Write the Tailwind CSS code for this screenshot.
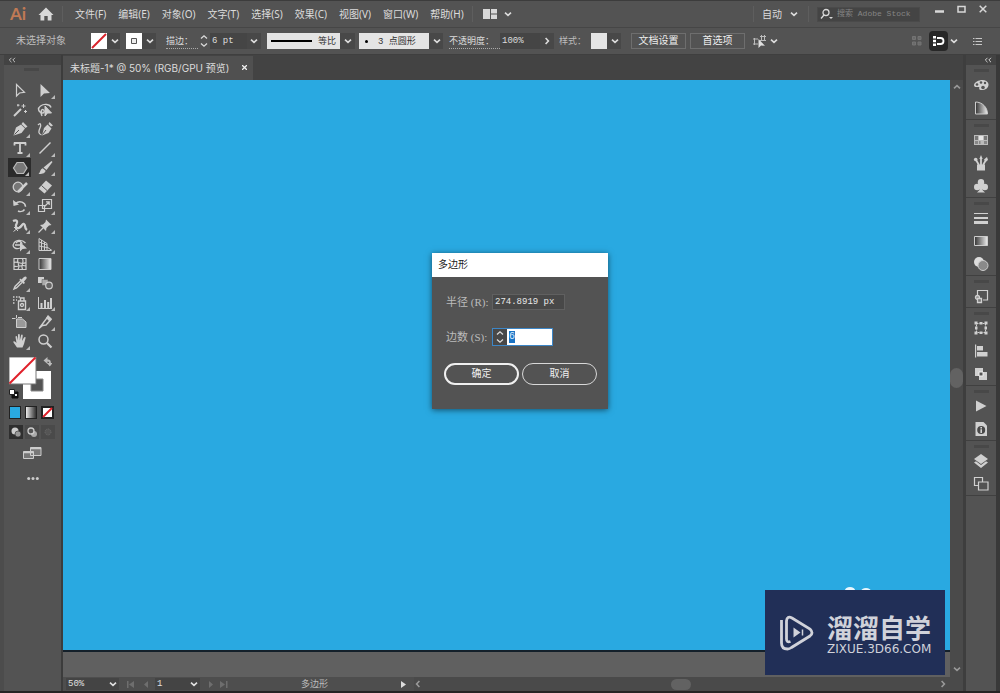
<!DOCTYPE html>
<html lang="zh-CN">
<head>
<meta charset="utf-8">
<title>未标题-1* @ 50%</title>
<script src="https://cdn.jsdelivr.net/npm/@tailwindcss/browser@4"></script>
</head>
<body class="h-screen overflow-hidden bg-[#535353] font-['Noto_Sans','Noto_Sans_CJK_SC',sans-serif] text-[10px] leading-3 text-[#dcdcdc]">
<svg class="hidden">
  <symbol id="chev" viewBox="0 0 8 8"><path d="M1 2.6 L4 5.4 L7 2.6" fill="none" stroke="currentColor" stroke-width="1.6"/></symbol>
  <symbol id="spin" viewBox="0 0 8 14"><path d="M1 4.5 L4 1.8 L7 4.5 M1 9.5 L4 12.2 L7 9.5" fill="none" stroke="currentColor" stroke-width="1.3"/></symbol>
  <symbol id="dbl" viewBox="0 0 8 6"><path d="M3.5 .8 L1.3 3 L3.5 5.2 M7 .8 L4.8 3 L7 5.2" fill="none" stroke="currentColor" stroke-width="1"/></symbol>
</svg>

<div class="flex h-full flex-col border-b-2 border-[#262424]">
  <!-- menu bar -->
  <header class="flex h-7 shrink-0 items-center border-t border-b border-t-[#3c3c3c] border-b-[#464646] pr-[13px]">
    <span class="ml-2.5 w-7 font-['Lato','Open_Sans',sans-serif] text-[17px] leading-5 font-bold text-[#c07a55]">Ai</span>
    <button aria-label="主页" class="flex w-4 justify-center"><svg class="h-4 w-4" viewBox="0 0 16 16"><path d="M8 1.5 L15.5 9 H13.5 V14.5 H9.7 V10 H6.3 V14.5 H2.500 V9 H.5 Z" fill="#d8d8d8"/></svg></button>
    <i class="ml-2 h-4 w-px bg-[#5e5e5e]"></i>
    <nav class="ml-3 flex gap-3">
      <button>文件(F)</button><button>编辑(E)</button><button>对象(O)</button><button>文字(T)</button><button>选择(S)</button><button>效果(C)</button><button>视图(V)</button><button>窗口(W)</button><button>帮助(H)</button>
    </nav>
    <i class="ml-2 h-4 w-px bg-[#5e5e5e]"></i>
    <button aria-label="排列文档" class="ml-2.5 flex items-center gap-1.5"><svg class="h-[10px] w-[15px]" viewBox="0 0 15 10" fill="#d8d8d8"><path d="M0 0h7v10H0zM8 0h6v4.500H8zM8 5.500h6V10H8z"/></svg><svg class="h-2 w-2"><use href="#chev"/></svg></button>
    <i class="ml-auto h-4 w-px bg-[#5e5e5e]"></i>
    <button class="ml-2 flex items-center gap-2">自动<svg class="h-2 w-2"><use href="#chev"/></svg></button>
    <i class="ml-2.5 h-4 w-px bg-[#5e5e5e]"></i>
    <label class="ml-2 flex h-[15px] w-[103px] items-center border border-[#4a4a4a] bg-[#444] pl-0.5">
      <svg class="mr-1 h-3 w-[13px] shrink-0" viewBox="0 0 13 12" fill="none" stroke="#d8d8d8" stroke-width="1.300"><circle cx="6" cy="4.500" r="3"/><path d="M4 7 L1 10.500"/><path d="M9 9h4l-2 2z" fill="#d8d8d8" stroke="none"/></svg>
      <input aria-label="搜索" placeholder="搜索 Adobe Stock" class="w-full min-w-0 bg-transparent font-['Liberation_Mono','Noto_Sans_CJK_SC',monospace] text-[8px] text-[#8b8b8b] outline-none placeholder:text-[#858585]">
    </label>
    <div class="ml-[15px] flex h-full items-start gap-[13px] pt-1">
      <button aria-label="最小化"><svg class="h-[10px] w-[9px]" viewBox="0 0 9 10"><path d="M0 6.500h9" stroke="#d8d8d8" stroke-width="2.500"/></svg></button>
      <button aria-label="最大化"><svg class="h-2 w-[9px]" viewBox="0 0 9 8"><path d="M1 1.500h7v5.500H1z" fill="none" stroke="#d8d8d8" stroke-width="1.500"/></svg></button>
      <button aria-label="关闭"><svg class="h-2 w-2" viewBox="0 0 8 8"><path d="M.7 .7 L7.3 7.3 M7.300 .7 L.7 7.300" stroke="#d8d8d8" stroke-width="1.500"/></svg></button>
    </div>
  </header>

  <!-- control bar -->
  <section class="flex h-[27px] shrink-0 items-center border-b border-[#3f3f3f] font-['Liberation_Mono','Noto_Sans_CJK_SC',monospace]">
    <span class="ml-4 w-[75px] pt-px text-[#bdbdbd]">未选择对象</span>
    <button aria-label="填色" class="flex h-4 w-[29px] items-center bg-[#484848]"><svg class="mr-1 h-4 w-4" viewBox="0 0 16 16"><path d="M0 0h16v16H0z" fill="#fff"/><path d="M1 15 L15 1" stroke="#d8232b" stroke-width="2"/></svg><svg class="h-2 w-2"><use href="#chev"/></svg></button>
    <button aria-label="描边颜色" class="ml-1.5 flex h-4 w-[30px] items-center bg-[#484848]"><svg class="mr-1 h-4 w-4" viewBox="0 0 16 16"><path d="M0 0h16v16H0z" fill="#fff"/><path d="M5.500 5.500h5v5h-5z" fill="#eee" stroke="#555"/></svg><svg class="h-2 w-2"><use href="#chev"/></svg></button>
    <label for="sw" class="ml-2.5 w-8 border-b border-dotted border-[#aaa] pt-0.5 text-[9px] whitespace-nowrap">描边：</label>
    <button aria-label="调整描边" class="flex h-4 w-3 items-center justify-center"><svg class="h-3.5 w-2"><use href="#spin"/></svg></button>
    <input id="sw" value="6 pt" class="h-4 w-[37px] bg-[#454545] pl-0.5 text-[9px]">
    <button aria-label="描边粗细列表" class="flex h-4 w-3.5 items-center justify-center bg-[#484848]"><svg class="h-2 w-2"><use href="#chev"/></svg></button>
    <button class="ml-1.5 flex h-4 w-[88px] items-center bg-[#484848]"><span class="flex h-4 w-[73px] items-center gap-1.5 bg-[#e4e4e4] pl-1 text-[9px] text-[#333]"><i class="h-0.5 w-[41px] bg-black"></i><span class="pt-0.5">等比</span></span><svg class="ml-1 h-2 w-2"><use href="#chev"/></svg></button>
    <button class="ml-1 flex h-4 w-[84px] items-center bg-[#484848]"><span class="flex h-4 w-[70px] items-center bg-[#e4e4e4] pl-1.5 text-[9px] whitespace-pre text-[#333]"><i class="mr-2.5 h-[3px] w-[3px] rounded-full bg-black"></i><span class="pt-0.5">3 点圆形</span></span><svg class="ml-1 h-2 w-2"><use href="#chev"/></svg></button>
    <label for="op" class="ml-1.5 w-[51px] border-b border-dotted border-[#aaa] pt-0.5 text-[9px] whitespace-nowrap">不透明度：</label>
    <input id="op" value="100%" class="h-4 w-10 bg-[#454545] pl-0.5 text-[9px]">
    <button aria-label="不透明度滑块" class="flex h-4 w-3.5 items-center justify-center bg-[#484848]"><svg class="h-2 w-2 -rotate-90"><use href="#chev"/></svg></button>
    <span class="ml-[5px] w-8 pt-0.5 text-[9px] whitespace-nowrap text-[#bdbdbd]">样式：</span>
    <button aria-label="图形样式" class="flex h-4 w-[30px] items-center bg-[#484848]"><i class="mr-1 h-4 w-4 bg-[#e4e4e4]"></i><svg class="h-2 w-2"><use href="#chev"/></svg></button>
    <button class="ml-2.5 h-4 w-[55px] border border-[#6e6e6e] pt-px text-[#eee]">文档设置</button>
    <button class="ml-1 h-4 w-[55px] border border-[#6e6e6e] pt-px text-[#eee]">首选项</button>
    <button aria-label="选择类似对象" class="ml-2 flex items-center gap-1"><svg class="h-[13px] w-[13px]" viewBox="0 0 13 13"><path d="M0 4h5M0 9h5M1.500 3v7M7 1.500h6M7 5.500h6M8.500 0v6M11.500 0v6" stroke="#bbb"/><path d="M5.500 4v9l2.500-2.500 4 .3z" fill="#e0e0e0"/></svg><svg class="h-2 w-2"><use href="#chev"/></svg></button>
    <svg class="ml-auto h-2.5 w-2.5" viewBox="0 0 10 10"><path d="M.5 .5h3v3h-3zM6 .5h3v3H6zM.5 6h3v3h-3zM6 6h3v3H6z" fill="#6a6a6a" stroke="#747474"/></svg>
    <button aria-label="对齐" class="ml-[7px] flex h-5 w-[19px] items-center justify-center rounded-sm bg-[#272727]"><svg class="h-3 w-[13px]" viewBox="0 0 13 12"><path d="M1 1h3v2.500H1zM1 4.700h3v2.500H1zM1 8.500h3V11H1z" fill="#fff"/><path d="M5 3h3.500a2.600 2.600 0 0 1 0 6H5" fill="none" stroke="#fff" stroke-width="1.800"/></svg></button>
    <svg class="ml-0.5 h-2 w-2"><use href="#chev"/></svg>
    <button aria-label="面板菜单" class="mr-[18px] ml-[15px]"><svg class="h-[9px] w-[9px]" viewBox="0 0 9 9"><path d="M0 1.500h1.500M0 4.500h1.500M0 7.500h1.500M2.500 1.500H9M2.500 4.500H9M2.500 7.500H9" stroke="#c8c8c8"/></svg></button>
  </section>

  <div class="flex min-h-0 flex-1">
    <!-- toolbox -->
    <aside class="flex w-[63px] shrink-0 flex-col border-r-2 border-l-4 border-r-[#3c3c3c] border-l-[#4c4c4c]">
      <div class="flex h-[10px] shrink-0 items-center bg-[#434343] pl-1 text-[#c0c0c0]"><svg class="h-1.5 w-2"><use href="#dbl"/></svg></div>
      <i class="mt-[3px] ml-5 h-[3px] w-[15px] shrink-0 bg-[#484848]"></i>
      <div class="mt-[10px] ml-[3px] grid h-[270px] w-[50px] shrink-0 grid-cols-2 grid-rows-14 text-[#cfcfcf] [&_button]:relative [&_button]:flex [&_button]:items-center [&_button]:justify-center [&_svg]:h-4 [&_svg]:w-4 [&_.m]:absolute [&_.m]:right-0.5 [&_.m]:bottom-px [&_.m]:border-2 [&_.m]:border-transparent [&_.m]:border-r-[#bbb] [&_.m]:border-b-[#bbb]">
        <button aria-label="选择"><svg viewBox="0 0 16 16"><path d="M4.500 1.500V13L7.500 10 12.500 9.300Z" fill="none" stroke="currentColor" stroke-width="1.200"/></svg></button>
        <button aria-label="直接选择"><svg viewBox="0 0 16 16"><path d="M3.500 1V14L7 10.500 13 10Z" fill="currentColor"/></svg><i class="m"></i></button>
        <button aria-label="魔棒"><svg viewBox="0 0 16 16" stroke="currentColor"><path d="M2 14 L9 7" stroke-width="2"/><path d="M11.500 2v4M9.500 4h4M6 2v2.500M5 3.200h2.500M13.500 8v3M12 9.500h3" /></svg></button>
        <button aria-label="套索"><svg viewBox="0 0 16 16" fill="none" stroke="currentColor"><path d="M5 10.500C1 10 .5 6 3.500 4 7 1.500 13 2 14 5.500M5 10.500c-2-2.500 1-4 2-2s-1 3-3 2.500l1 3" stroke-width="1.400"/><path d="M8 4v10l2.500-3 4 0z" fill="currentColor"/></svg></button>
        <button aria-label="钢笔"><svg viewBox="0 0 16 16"><path d="M1.500 14.500 L4 6.500 9 3.500 13 7.500 9.500 12Z M9.500 3l1.500-2 4.500 4.500-2 1.500z" fill="currentColor"/><path d="M2.500 13.500 L7 9" stroke="#535353"/></svg><i class="m"></i></button>
        <button aria-label="曲率"><svg viewBox="0 0 16 16"><path d="M5 14.500 L7 7 10.500 3.500 14.500 7.500 11.500 12Z M11.500 3l1-2 3.500 3.500-2 1z" fill="currentColor"/><path d="M5.500 13.500 L9 9" stroke="#535353"/><path d="M1 4c2.500-3 3.500 0 2 3s-2 6 1.500 7" fill="none" stroke="currentColor" stroke-width="1.300"/></svg></button>
        <button aria-label="文字"><svg viewBox="0 0 16 16"><path d="M2.500 2.500V5.500M13.500 2.500V5.500M2 3h12M8 3V13M5.500 13h5" stroke="currentColor" stroke-width="1.800"/></svg><i class="m"></i></button>
        <button aria-label="直线段"><svg viewBox="0 0 16 16"><path d="M2.500 13.500 L13.500 2.500" stroke="currentColor" stroke-width="1.400"/></svg><i class="m"></i></button>
        <button aria-label="多边形" class="mx-px bg-[#2b2b2b]"><svg viewBox="0 0 16 16"><path d="M5 2.500h6.500L15 8l-3.500 5.500H5L1.500 8Z" fill="#777" stroke="#bbb" stroke-width="1.200"/></svg><i class="m"></i></button>
        <button aria-label="画笔"><svg viewBox="0 0 16 16"><path d="M14.500 1 L15.500 2 9.500 10 6.500 7.500Z M5.800 8.300l2.800 2.500C8 14 4 14 1.500 14c2-1.500 1.500-5 4.300-5.700z" fill="currentColor"/></svg><i class="m"></i></button>
        <button aria-label="Shaper"><svg viewBox="0 0 16 16"><circle cx="6" cy="8" r="4.800" fill="#777" stroke="currentColor" stroke-width="1.300"/><path d="M6 13 L15 4" stroke="currentColor" stroke-width="2.500"/></svg><i class="m"></i></button>
        <button aria-label="橡皮擦"><svg viewBox="0 0 16 16"><path d="M9 1.500 L15 6.500 7.500 14.500 1.500 9.500Z" fill="currentColor"/><path d="M4.500 6.500l5.500 5" stroke="#535353"/></svg><i class="m"></i></button>
        <button aria-label="旋转"><svg viewBox="0 0 16 16"><path d="M3.500 5.500C8 1.500 14 5 13.500 9.500M12.500 11.500C11 13.500 8 14 6 13" fill="none" stroke="currentColor" stroke-width="1.500" stroke-dasharray="13 1 2 1"/><path d="M1 2l.5 6L7 6.500z" fill="currentColor"/></svg><i class="m"></i></button>
        <button aria-label="比例缩放"><svg viewBox="0 0 16 16" fill="none" stroke="currentColor" stroke-width="1.200"><path d="M5.500 1.500h9v9h-9zM1.500 7.500h6v6h-6zM7 9l5-5M9 3.800h3.200V7"/></svg><i class="m"></i></button>
        <button aria-label="宽度"><svg viewBox="0 0 16 16" fill="none" stroke="currentColor"><path d="M1 3c4-2 5 1 3.500 3S4 11 7 10s3-5 5-4 0 4 3 6" stroke-width="2.300"/><path d="M1.500 13.500 L12 5M2 9l4 4"/></svg><i class="m"></i></button>
        <button aria-label="操控变形"><svg viewBox="0 0 16 16"><path d="M9 1.500 L14.500 7l-2.500.5-2.500 2.500-.5 3-6-6 3-.5L8.500 4z" fill="currentColor"/><path d="M6 10l-4.500 4.500" stroke="currentColor" stroke-width="1.300"/></svg><i class="m"></i></button>
        <button aria-label="形状生成器"><svg viewBox="0 0 16 16"><path d="M8 11C4 13 0 10 1.500 7 3 2.500 10 2 13.500 6M4 6c3-3 6-1 6 1M3 8h5" fill="none" stroke="currentColor" stroke-width="1.300"/><path d="M8 5v9.500l2.500-2.500 4.500-.5z" fill="currentColor"/></svg><i class="m"></i></button>
        <button aria-label="透视网格"><svg viewBox="0 0 16 16" fill="none" stroke="currentColor"><path d="M2 1.500v12h12M2 1.500l8 5v7M2 5l8 3M2 9l8 1.500M4.500 3v10.500M7.500 5v8.500M10 10l5 3.500"/></svg><i class="m"></i></button>
        <button aria-label="网格"><svg viewBox="0 0 16 16" fill="none" stroke="currentColor"><path d="M2 2.500h12v11H2zM2 6.500c4-2 7 3 12 0M2 10c4 2 7-2 12 0M6 2.500c-2 4 3 6 0 11M10.500 2.500c2 4-2 6 0 11" stroke-width="1.200"/></svg></button>
        <button aria-label="渐变"><svg viewBox="0 0 16 16"><defs><linearGradient id="g"><stop stop-color="#333"/><stop offset="1" stop-color="#eee"/></linearGradient></defs><path d="M2 2.500h12v11H2z" fill="url(#g)" stroke="#ccc"/></svg></button>
        <button aria-label="吸管"><svg viewBox="0 0 16 16"><path d="M8 3.500l1.500 1L12 2c2-1.500 3.500.5 2.200 2L12 6.500l1 1.500-1.500 1-4-4z" fill="currentColor"/><path d="M8.500 6 L3 11.500l-1 2.500 2.500-1L10 7.500" fill="none" stroke="currentColor" stroke-width="1.400"/></svg><i class="m"></i></button>
        <button aria-label="混合"><svg viewBox="0 0 16 16"><path d="M1 2h6v6H1z" fill="currentColor"/><path d="M5 4.500h6v6H5z" fill="#aaa" stroke="#535353" stroke-width=".5"/><circle cx="12" cy="10.500" r="3.300" fill="#666" stroke="currentColor" stroke-width="1.200"/></svg></button>
        <button aria-label="符号喷枪"><svg viewBox="0 0 16 16" fill="none" stroke="currentColor"><path d="M6.500 6h7v8.500h-7zM8.500 5.500V3h3.500v2.500" stroke-width="1.400"/><circle cx="10" cy="10" r="1.500" stroke-width="1.300"/><path d="M1 2h1.500M4 2h1.500M1 5h1.500M4 5h1M1 8h1.500M6.500 2H8" stroke-width="1.500"/></svg><i class="m"></i></button>
        <button aria-label="柱形图"><svg viewBox="0 0 16 16" stroke="currentColor"><path d="M1.500 2v12M1 13.500h14" /><path d="M4.500 13V8M8 13V5M11.200 13V7M14 13V3" stroke-width="2"/></svg><i class="m"></i></button>
        <button aria-label="画板"><svg viewBox="0 0 16 16"><path d="M4.500 5h6l3.500 3v5.500H4.500z" fill="#999" stroke="currentColor"/><path d="M4.500 1v3M0 4.500h3.500M6 3.500h4" stroke="currentColor"/></svg></button>
        <button aria-label="切片"><svg viewBox="0 0 16 16"><path d="M2 14.500 L11 2.500 14 5.500 9 11 5.500 11.500Z" fill="none" stroke="currentColor" stroke-width="1.400"/><path d="M11 1l4 4-2.500 2.500-3.500-3.500z" fill="currentColor"/></svg><i class="m"></i></button>
        <button aria-label="抓手"><svg viewBox="0 0 16 16"><path d="M5 14.500L1.500 9.500C1 8 2.500 8 3.500 9l1 1L3.500 4c0-1.500 1.500-1.500 1.700 0L6 7.500V2c0-1.500 1.800-1.500 1.800 0v5.500L9 2.500c.3-1.500 2-1 1.700.5L10 8l2-3.500c.8-1.200 2-.5 1.500.8L12 11l-1.500 3.500z" fill="currentColor"/></svg><i class="m"></i></button>
        <button aria-label="缩放"><svg viewBox="0 0 16 16" fill="none" stroke="currentColor"><circle cx="6.500" cy="6.500" r="4.500" stroke-width="1.500"/><path d="M10 10l4.500 4.500" stroke-width="2.200"/></svg></button>
      </div>
      <div class="mt-[6px] ml-[5px] h-[42px] w-[43px] shrink-0">
        <svg class="h-[42px] w-[43px]" viewBox="0 0 43 42"><path d="M14 14h28v28H14z" fill="#fff"/><path d="M22 22h12v12H22z" fill="#535353" stroke="#888"/><path d="M0 0h27v27H0z" fill="#fff" stroke="#777"/><path d="M.5 26.500 L26.500 .5" stroke="#e0202a" stroke-width="2"/><path d="M37.500 3.500h1.500q2 0 2 2.500v1" fill="none" stroke="#bbb" stroke-width="1.800"/><path d="M38.500 0v7L34.500 3.500zM38 6h5.500l-2.700 3.500z" fill="#bbb"/><path d="M3 35h6v6H3z" fill="#111" stroke="#111"/><path d="M.5 32.500h5v5h-5z" fill="#fff" stroke="#222"/><path d="M6 37h2v2H6z" fill="#eee"/></svg>
      </div>
      <div class="mt-[7px] ml-[5px] flex shrink-0 gap-1">
        <button aria-label="颜色" class="h-[13px] w-3 border border-[#222] bg-[#29a9e1]"></button>
        <button aria-label="渐变填充" class="h-[13px] w-3 border border-[#222] bg-linear-to-r from-[#eee] to-[#333]"></button>
        <button aria-label="无" class="h-[13px] w-[13px]"><svg class="h-[13px] w-[13px]" viewBox="0 0 13 13"><path d="M0 0h13v13H0z" fill="#222"/><path d="M2 2h9v9H2z" fill="#fff"/><path d="M2 11L11 2" stroke="#e0202a" stroke-width="2"/></svg></button>
      </div>
      <div class="mt-[6px] ml-[5px] flex shrink-0 gap-0.5">
        <button aria-label="正常绘图" class="h-[14px] w-3.5 bg-[#2f2f2f]"><svg class="h-3.5 w-3.5" viewBox="0 0 14 14"><circle cx="6" cy="6" r="3.500" fill="#ccc"/><circle cx="9" cy="9" r="3" fill="#999" stroke="#333" stroke-width=".6"/></svg></button>
        <button aria-label="背面绘图" class="h-[14px] w-3.5 bg-[#4a4a4a]"><svg class="h-3.5 w-3.5" viewBox="0 0 14 14"><circle cx="9" cy="9" r="3" fill="#aaa"/><circle cx="6" cy="6" r="3" fill="#555" stroke="#ccc" stroke-width="1.300"/></svg></button>
        <button aria-label="内部绘图" class="h-[14px] w-3.5 bg-[#4a4a4a]"><svg class="h-3.5 w-3.5" viewBox="0 0 14 14"><circle cx="7" cy="7" r="3" fill="#555" stroke="#6c6c6c" stroke-dasharray="1 1"/></svg></button>
      </div>
      <button aria-label="屏幕模式" class="mt-[7px] ml-[19px] w-[19px] shrink-0"><svg class="h-3.5 w-[19px]" viewBox="0 0 19 14" fill="#777" stroke="#ccc"><path d="M7.500 1.500h10.500v8H7.500zM.5 5.500h10v7H.5z"/><path d="M7.500 2.500H18M.5 6.500h10" stroke-width="1.500"/></svg></button>
      <button aria-label="编辑工具栏" class="mt-4 ml-[23px] w-3 shrink-0"><svg class="h-[5px] w-3" viewBox="0 0 12 5" fill="#ccc"><circle cx="1.700" cy="2.500" r="1.500"/><circle cx="6" cy="2.500" r="1.500"/><circle cx="10.300" cy="2.500" r="1.500"/></svg></button>
    </aside>

    <!-- document window -->
    <main class="relative flex min-w-0 flex-1 flex-col">
      <div class="flex h-[25px] shrink-0 items-end bg-[#434343]">
        <div class="flex h-6 w-[190px] items-center bg-[#505050] pb-px pl-[7px]"><span class="font-['Inter','Noto_Sans_CJK_SC',sans-serif] whitespace-nowrap">未标题-1* @ 50% (RGB/GPU 预览)</span>
          <button aria-label="关闭文档" class="mr-1.5 ml-auto"><svg class="h-[5px] w-[5px]" viewBox="0 0 5 5"><path d="M0 0L5 5M5 0L0 5" stroke="#eee" stroke-width="1.300"/></svg></button></div>
      </div>
      <div class="flex min-h-0 flex-1">
        <div class="flex min-w-0 flex-1 flex-col">
          <div class="flex-1 border-b-2 border-[#14202a] bg-[#29a9e1]"></div>
          <div class="h-[25px] shrink-0 bg-[#606060]"></div>
        </div>
        <div class="flex w-[13px] flex-col items-center justify-between bg-[#4a4a4a] text-[#999]">
          <svg class="mt-[3px] h-2 w-2 rotate-180"><use href="#chev"/></svg>
          <i class="h-5 w-[13px] rounded-full bg-[#626262]"></i>
          <svg class="mb-1 h-2 w-2"><use href="#chev"/></svg>
        </div>
      </div>
      <footer class="flex h-[14px] shrink-0 items-center bg-[#4e4e4e] font-['Liberation_Mono','Noto_Sans_CJK_SC',monospace] text-[9px] text-[#e0e0e0]">
        <input aria-label="缩放比例" value="50%" class="ml-[3px] h-3 w-[41px] bg-[#444] pl-0.5">
        <button aria-label="缩放列表" class="flex h-3 w-3 items-center justify-center bg-[#444]"><svg class="h-2 w-2"><use href="#chev"/></svg></button>
        <svg class="ml-2 h-[7px] w-[22px]" viewBox="0 0 22 7" fill="#6e6e6e"><path d="M0 0h1.500v7H0zM7 0v7L2 3.500zM21 0v7L17 3.500z"/></svg>
        <input aria-label="画板" value="1" class="ml-1.5 h-3 w-[33px] bg-[#444] pl-0.5">
        <button aria-label="画板列表" class="flex h-3 w-3 items-center justify-center bg-[#444]"><svg class="h-2 w-2"><use href="#chev"/></svg></button>
        <svg class="ml-2 h-[7px] w-5" viewBox="0 0 20 7" fill="#6e6e6e"><path d="M1 0v7l4-3.500zM12 0v7l5-3.500zM18 0h1.500v7H18z"/></svg>
        <span class="ml-[73px] pt-0.5 text-[#bbb]">多边形</span>
        <button aria-label="状态" class="ml-[73px]"><svg class="h-[7px] w-[5px]" viewBox="0 0 5 7"><path d="M0 0v7l5-3.500z" fill="#ddd"/></svg></button>
        <div class="ml-2 flex h-full flex-1 items-center justify-between bg-[#4a4a4a] pr-4 text-[#999]">
          <svg class="h-2 w-2 rotate-90"><use href="#chev"/></svg>
          <i class="h-[11px] w-5 rounded-full bg-[#626262]"></i>
          <svg class="h-2 w-2 -rotate-90"><use href="#chev"/></svg>
        </div>
      </footer>

      <!-- polygon dialog -->
      <form class="absolute top-[198px] left-[369px] w-44 bg-[#535353] pb-6 font-['Liberation_Serif','Noto_Sans_CJK_SC',serif] text-[11px] shadow-[0_1px_6px_rgba(0,0,0,0.55)]">
        <h2 class="flex h-6 items-center bg-white pl-1.5 text-[10px] text-[#222]">多边形</h2>
        <div class="mt-[17px] flex h-4 items-center pl-3.5">
          <label for="r" class="w-[46px] text-[#bcbcbc]">半径 (R):</label>
          <input id="r" value="274.8919 px" class="h-4 w-[73px] border border-[#606060] bg-[#484848] pl-0.5 font-['Liberation_Mono',monospace] text-[9px] text-[#e8e8e8]">
        </div>
        <div class="mt-[18px] flex h-[17px] items-center pl-3.5">
          <label for="s" class="w-[46px] text-[#bcbcbc]">边数 (S):</label>
          <div class="flex h-[18px] w-[61px] border border-[#3d86c6]">
            <button type="button" aria-label="调整边数" class="flex w-3.5 items-center justify-center bg-[#484848]"><svg class="h-3.5 w-2"><use href="#spin"/></svg></button>
            <div class="relative flex-1 bg-white"><i class="absolute top-0.5 left-0.5 h-3 w-1.5 bg-[#1a73c4]"></i><input id="s" value="6" class="relative h-4 w-full bg-transparent pl-0.5 font-['Liberation_Mono',monospace] text-[10px] text-[#d8ecff]"></div>
          </div>
        </div>
        <div class="mt-[18px] flex h-[22px] gap-[3px] pl-3 text-[10px] text-[#f0f0f0]">
          <button type="button" class="w-[75px] rounded-full border-2 border-[#f0f0f0]">确定</button>
          <button type="button" class="w-[75px] rounded-full border border-[#d8d8d8]">取消</button>
        </div>
      </form>

      <!-- site watermark -->
      <svg class="absolute right-[90px] bottom-[98px] h-[6px] w-[30px]" viewBox="0 0 30 6" fill="#e8f6fd"><ellipse cx="7" cy="3" rx="5" ry="3"/><ellipse cx="23" cy="4" rx="5" ry="3"/></svg>
      <div class="absolute right-[18px] bottom-4 flex h-[85px] w-[180px] items-center bg-[#212f57] pl-3.5 text-[#d0d2da]">
        <svg class="h-9 w-9 shrink-0" viewBox="0 0 36 36" fill="none" stroke="currentColor" stroke-width="2.800"><path d="M2.500 5v23q0 6 6 6 2 0 4-1.500L31 21q4-3 0-7L13 3Q8 .5 7.500 6v18q0 4 4 2.500"/><path d="M14.500 12.500v10l7-5z" fill="currentColor" stroke="none"/><path d="M23.500 14.500v6" stroke-width="1.500"/></svg>
        <div class="ml-3 flex flex-col"><span class="font-['Noto_Sans_CJK_SC',sans-serif] text-[26px] leading-8 font-bold whitespace-nowrap">溜溜自学</span><span class="font-['DejaVu_Sans',sans-serif] text-[12px] leading-3 whitespace-nowrap">ZIXUE.3D66.COM</span></div>
      </div>
    </main>

    <!-- panel dock -->
    <aside class="flex w-[37px] shrink-0 flex-col border-r-4 border-l-3 border-r-[#393939] border-l-[#3e3e3e] text-[#d0d0d0] [&_button]:flex [&_button]:h-[23px] [&_button]:items-center [&_button]:justify-center [&_section]:relative [&_section]:flex [&_section]:flex-col [&_section]:border-b [&_section]:border-[#404040] [&_section]:pt-2 [&_section_i]:absolute [&_section_i]:top-1 [&_section_i]:left-2 [&_section_i]:h-[3px] [&_section_i]:w-[15px] [&_section_i]:bg-[#484848] [&_section_svg]:h-4 [&_section_svg]:w-4">
      <div class="flex h-[10px] items-center justify-end bg-[#434343] pr-1"><svg class="h-1.5 w-2"><use href="#dbl"/></svg></div>
      <section><i></i>
        <button aria-label="颜色面板"><svg viewBox="0 0 16 16"><path d="M1 8C1.500 3 14 0 15.500 7c.5 6-7 7-9 5.500-1-1 .5-2-.5-2.500C4 9.500 1 11 1 8z" fill="currentColor"/><g fill="#535353"><circle cx="4" cy="7.500" r="1.300"/><circle cx="8" cy="5.500" r="1.300"/><circle cx="12" cy="6" r="1.200"/><circle cx="10" cy="10.500" r="1.800"/></g></svg></button>
        <button aria-label="颜色参考"><svg viewBox="0 0 16 16"><path d="M2.500 2v12h12C14.500 7 9 2 2.500 2z" fill="url(#g)" stroke="#ccc"/></svg></button></section>
      <section><i></i>
        <button aria-label="色板"><svg viewBox="0 0 16 16"><path d="M1 3h14v10H1z" fill="#bbb"/><path d="M2 4h3v4H2zM11 4h3v4h-3z" fill="#777"/><path d="M6 4h4v4H6z" fill="#e5e5e5"/><path d="M2 9h3v3H2zM6 9h1.500v3H6zM11 9h3v3h-3z" fill="#888"/></svg></button>
        <button aria-label="画笔面板"><svg viewBox="0 0 16 16" fill="currentColor"><path d="M4 9.500h8v6H4z"/><path d="M6 10L3 5M8 10V3M10 10l3-5" stroke="currentColor" stroke-width="1.800"/><circle cx="2.700" cy="4.500" r="1.800"/><path d="M6.300 4L8 0l1.700 4zM11 4.500L14 2l1 3-2.500 2z"/></svg></button>
        <button aria-label="符号"><svg viewBox="0 0 16 16" fill="currentColor"><circle cx="8" cy="4.200" r="3.200"/><circle cx="4.200" cy="9" r="3.200"/><circle cx="11.800" cy="9" r="3.200"/><path d="M7 7h2l.5 5 2.500 2.500H4L6.500 12z"/></svg></button></section>
      <section><i></i>
        <button aria-label="描边面板"><svg viewBox="0 0 16 16" stroke="currentColor"><path d="M1 3.500h14"/><path d="M1 8h14" stroke-width="2"/><path d="M1 12.500h14" stroke-width="3"/></svg></button>
        <button aria-label="渐变面板"><svg viewBox="0 0 16 16"><path d="M1.500 3.500h13v9h-13z" fill="url(#g)" stroke="#ccc"/></svg></button>
        <button aria-label="透明度"><svg viewBox="0 0 16 16"><circle cx="6" cy="6" r="5" fill="#ddd"/><circle cx="10" cy="9.500" r="5" fill="#8a8a8a" stroke="#ccc"/></svg></button></section>
      <section><i></i>
        <button aria-label="资源导出"><svg viewBox="0 0 16 16" fill="none" stroke="currentColor"><path d="M4.500 7V2.500h10v9.500H10" stroke-width="1.200"/><circle cx="4.500" cy="9.500" r="2" fill="#888" stroke-width="1.300"/><path d="M4.500 10.500h4v4h-4z" fill="#777" stroke-width="1.300"/></svg></button></section>
      <section><i></i>
        <button aria-label="变换"><svg viewBox="0 0 16 16" fill="currentColor"><path d="M3.500 3.500h9v9h-9z" fill="none" stroke="currentColor" stroke-dasharray="2 1"/><path d="M1.500 1.500h3v3h-3zM6.500 2h3v2.500h-3zM11.500 1.500h3v3h-3zM2 6.500h2.500v3H2zM11.500 6.500H14v3h-2.500zM1.500 11.500h3v3h-3zM6.500 11.500h3V14h-3zM11.500 11.500h3v3h-3z"/></svg></button>
        <button aria-label="对齐面板"><svg viewBox="0 0 16 16" fill="currentColor"><path d="M2 1.500h1.200v13H2zM4 3h6v4.500H4zM4 9h10.500v4.500H4z"/></svg></button>
        <button aria-label="路径查找器"><svg viewBox="0 0 16 16"><path d="M2 2h8v8H2z" fill="currentColor"/><path d="M6 6h8v8H6z" fill="currentColor"/><path d="M6 6h4v4H6z" fill="#555" stroke="#eee"/></svg></button></section>
      <section><i></i>
        <button aria-label="动作"><svg viewBox="0 0 16 16"><path d="M3 2.500v11L13.500 8z" fill="currentColor"/></svg></button>
        <button aria-label="文档信息"><svg viewBox="0 0 16 16"><path d="M2.500 1h8L14 4.500V15H2.500z" fill="currentColor"/><circle cx="8.200" cy="9" r="4" fill="#484848"/><path d="M8.200 6v1.500M8.200 8.200V12" stroke="#ddd" stroke-width="1.500"/></svg></button></section>
      <section><i></i>
        <button aria-label="图层"><svg viewBox="0 0 16 16" fill="currentColor"><path d="M8 1l7 5-7 5-7-5z"/><path d="M1 9.500l2-1.300 5 3.800 5-3.800 2 1.300L8 15z"/></svg></button>
        <button aria-label="画板面板"><svg viewBox="0 0 16 16" fill="#535353" stroke="currentColor" stroke-width="1.200"><path d="M1.500 1.500h8v8h-8z"/><path d="M5.500 6h9.500v8H5.500z"/></svg></button></section>
    </aside>
  </div>
</div>
</body>
</html>
